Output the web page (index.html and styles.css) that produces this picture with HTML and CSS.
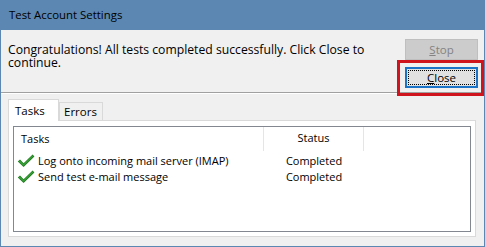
FILE: index.html
```html
<!DOCTYPE html>
<html>
<head>
<meta charset="utf-8">
<link rel="stylesheet" href="styles.css">
</head>
<body>
<div class="window">
  <div class="titlebar">Test Account Settings</div>
  <div class="top">
    <p class="message">Congratulations! All tests completed successfully. Click Close to<br>continue.</p>
    <div class="buttons">
      <button class="btn btn-disabled" disabled><u>S</u>top</button>
      <button class="btn btn-default"><span class="focus"><u>C</u>lose</span></button>
    </div>
  </div>
  <div class="separator"></div>
  <div class="tabs">
    <div class="tab tab-active">Tasks</div>
    <div class="tab">Errors</div>
  </div>
  <div class="panel">
    <div class="list">
      <div class="row header">
        <div class="col col-task">Tasks</div>
        <div class="col col-status">Status</div>
        <div class="col col-rest"></div>
      </div>
      <div class="row item">
        <div class="col col-task">
          <svg class="check" viewBox="0 0 18 14" width="18" height="14"><path d="M0.8 7.6 L3 5.6 L6.6 9.2 L15.6 0.6 L17.4 2.4 L6.6 13 Z" fill="#1f7d1f"/><path d="M1.6 7.6 L3 6.4 L6.6 10 L15.6 1.4 L16.4 2.2 L6.6 11.8 Z" fill="#3aa03a"/></svg>
          <span>Log onto incoming mail server (IMAP)</span>
        </div>
        <div class="col col-status">Completed</div>
      </div>
      <div class="row item">
        <div class="col col-task">
          <svg class="check" viewBox="0 0 18 14" width="18" height="14"><path d="M0.8 7.6 L3 5.6 L6.6 9.2 L15.6 0.6 L17.4 2.4 L6.6 13 Z" fill="#1f7d1f"/><path d="M1.6 7.6 L3 6.4 L6.6 10 L15.6 1.4 L16.4 2.2 L6.6 11.8 Z" fill="#3aa03a"/></svg>
          <span>Send test e-mail message</span>
        </div>
        <div class="col col-status">Completed</div>
      </div>
    </div>
  </div>
  <div class="highlight"></div>
</div>
</body>
</html>
```
FILE: styles.css
```css
* { box-sizing: border-box; }
html, body { margin: 0; padding: 0; }
body {
  width: 485px;
  height: 247px;
  font-family: "Open Sans", "Noto Sans", sans-serif;
  font-size: 11px;
  color: #000;
  background: #fff;
}
.window {
  position: relative;
  width: 485px;
  height: 247px;
  border: 1px solid #5b87b2;
  border-top: none;
  background: #f0f0f0;
}
.titlebar {
  height: 30px;
  margin: 0 -1px;
  padding: 7px 0 0 9px;
  background: #5b87b2;
  font-size: 11.4px;
  line-height: 16px;
}
.top {
  display: flex;
  justify-content: space-between;
  height: 62px;
}
.message {
  margin: 0;
  padding: 13px 0 0 7px;
  font-size: 12.2px;
  line-height: 13px;
  white-space: nowrap;
}
.buttons {
  display: flex;
  flex-direction: column;
  gap: 7px;
  padding: 9px 6px 0 0;
}
.btn {
  width: 73px;
  height: 21px;
  padding: 0;
  font-family: inherit;
  font-size: 11.5px;
  line-height: 16px;
  text-align: center;
}
.btn-disabled {
  background: #cccccc;
  border: 1px solid #bfbfbf;
  color: #838383;
}
.btn-default {
  background: #e1e1e1;
  border: 2px solid #1a73c6;
  color: #000;
  padding: 1px;
  display: flex;
}
.focus {
  flex: 1;
  border: 1px dotted #000;
  line-height: 13px;
}
.separator {
  height: 2px;
  margin: 0 0 5px 0;
  border-top: 1px solid #a0a0a0;
  border-bottom: 1px solid #ffffff;
}
.tabs {
  display: flex;
  align-items: flex-end;
  padding-left: 7px;
  height: 21px;
  position: relative;
  z-index: 1;
}
.tab {
  height: 18px;
  padding: 0 0 0 4px;
  width: 44px;
  border: 1px solid #d9d9d9;
  border-bottom: none;
  background: #f0f0f0;
  line-height: 17px;
  font-size: 11.5px;
}
.tab-active {
  height: 22px;
  width: 51px;
  padding: 2px 0 0 6px;
  background: #ffffff;
  margin-bottom: -1px;
}
.panel {
  margin: 0 8px 0 7px;
  height: 117px;
  border: 1px solid #d9d9d9;
  background: #ffffff;
  padding: 5px 4px 4px 4px;
}
.list {
  height: 106px;
  border: 1px solid #828790;
  background: #ffffff;
}
.row {
  display: flex;
}
.header {
  height: 24px;
}
.header .col {
  border-right: 1px solid #e5e5e5;
  line-height: 22px;
}
.col-task {
  width: 250px;
  padding-left: 7px;
  display: flex;
  align-items: center;
  white-space: nowrap;
}
.col-status {
  width: 100px;
  text-align: center;
}
.header .col-rest { width: 1px; border-right: none; }
.item {
  height: 16px;
  line-height: 16px;
}
.header + .item { margin-top: 2px; }
.item .col-task { padding-left: 3px; }
.check {
  flex: none;
  margin-right: 3px;
}
.highlight {
  position: absolute;
  left: 396px;
  top: 60px;
  width: 87px;
  height: 36px;
  border: 3px solid #d0141e;
}
```
